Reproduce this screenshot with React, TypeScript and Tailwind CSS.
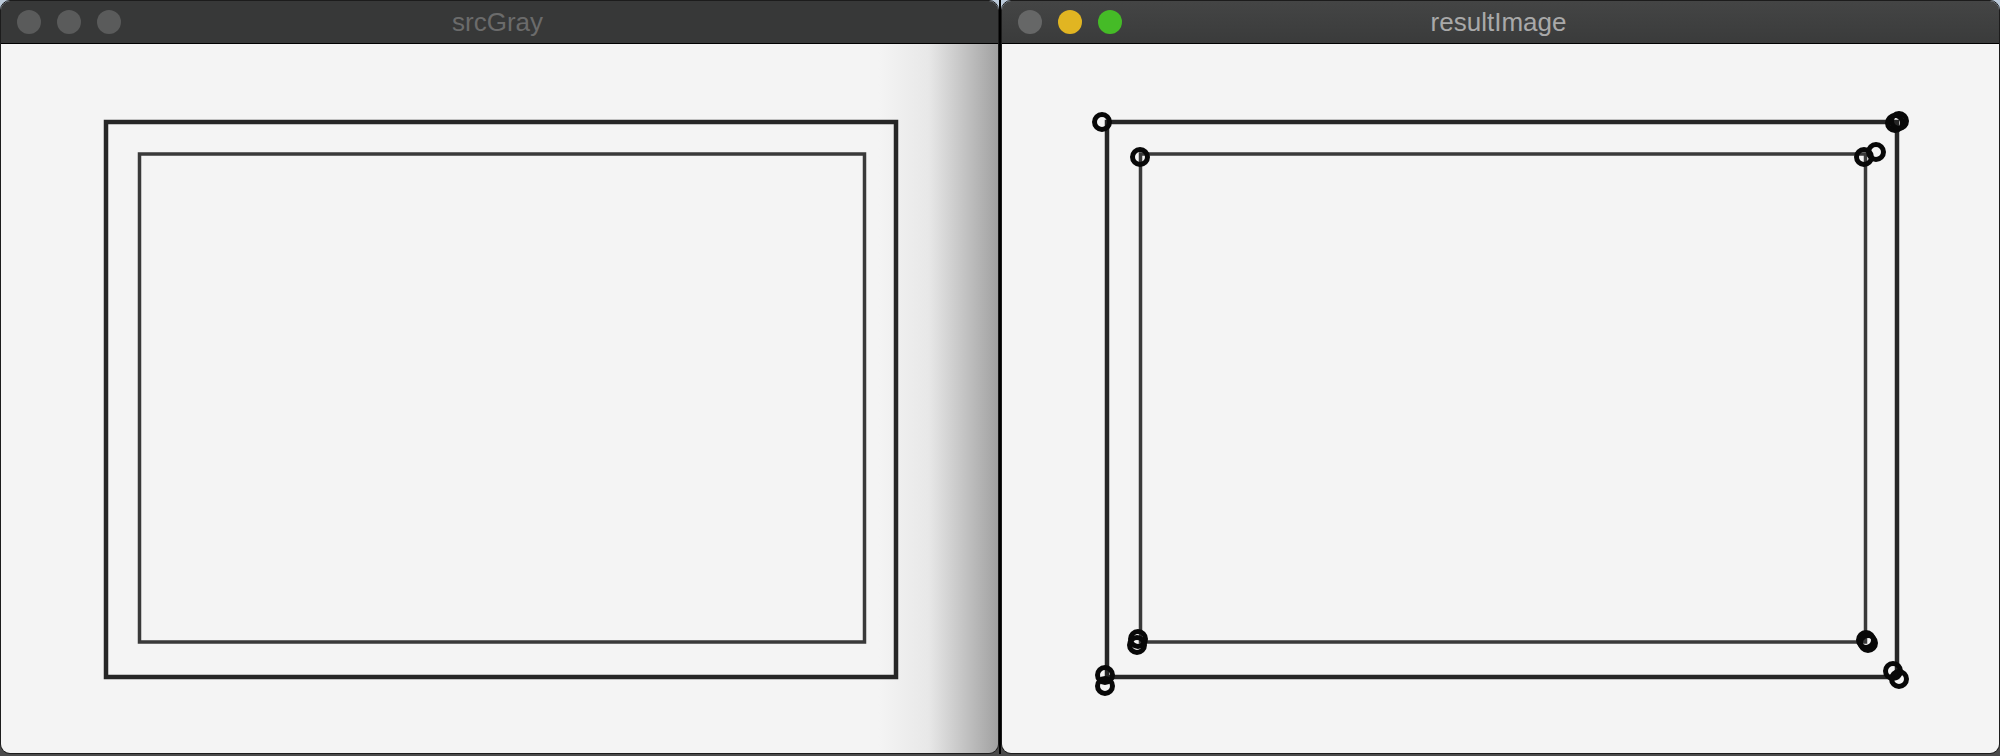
import React, { FC } from 'react'

type Ring = { x: number; y: number }

const TrafficLights: FC<{ active: boolean }> = ({ active }) => (
  <div className="flex items-center gap-4 pl-4">
    <span className={active ? 'h-6 w-6 rounded-full bg-[#666767]' : 'h-6 w-6 rounded-full bg-[#5a5b5b]'} />
    <span className={active ? 'h-6 w-6 rounded-full bg-[#e1b522]' : 'h-6 w-6 rounded-full bg-[#5a5b5b]'} />
    <span className={active ? 'h-6 w-6 rounded-full bg-[#45bb27]' : 'h-6 w-6 rounded-full bg-[#5a5b5b]'} />
  </div>
)

const Frames: FC<{ rings?: Ring[] }> = ({ rings = [] }) => (
  <svg width="998" height="709" viewBox="0 44 998 709" className="block">
    <rect x="105" y="122" width="790" height="555" fill="none" stroke="#262626" strokeWidth="4.5" />
    <rect x="138.5" y="154" width="725" height="488" fill="none" stroke="#393939" strokeWidth="3.5" />
    {rings.map((r, i) => (
      <circle key={i} cx={r.x} cy={r.y} r="7.5" fill="none" stroke="#080808" strokeWidth="5" />
    ))}
  </svg>
)

// detected corners, page coords minus the window's left edge
const corners: Ring[] = [
  { x: 100, y: 122 },
  { x: 138, y: 157 },
  { x: 893, y: 123 },
  { x: 897, y: 121 },
  { x: 862, y: 157 },
  { x: 874, y: 152 },
  { x: 136, y: 639 },
  { x: 135, y: 645 },
  { x: 103, y: 675 },
  { x: 103, y: 686 },
  { x: 864, y: 640 },
  { x: 866, y: 643 },
  { x: 891, y: 671 },
  { x: 897, y: 679 },
]

const Window: FC<{ title: string; active: boolean; shadow?: boolean; rings?: Ring[] }> = ({
  title,
  active,
  shadow,
  rings,
}) => (
  <div className="flex h-[754px] w-[999px] flex-col overflow-hidden rounded-[10px] border border-[#1c1c1c]">
    <div
      className={
        active
          ? 'relative flex h-[43px] shrink-0 items-center border-b border-black bg-[linear-gradient(to_bottom,#444545,#3a3b3b)]'
          : 'relative flex h-[43px] shrink-0 items-center border-b border-black bg-[#373838]'
      }
    >
      <TrafficLights active={active} />
      <span
        className={
          active
            ? 'flex-1 pr-[124px] text-center font-["Liberation_Sans",Arial,sans-serif] text-[26px] leading-none text-[#a9a9a9]'
            : 'flex-1 pr-[124px] text-center font-["Liberation_Sans",Arial,sans-serif] text-[26px] leading-none text-[#6b6b6b]'
        }
      >
        {title}
      </span>
    </div>
    <div
      className={
        shadow
          ? 'flex-1 bg-[linear-gradient(to_right,#f4f4f4_88%,#e8e8e8_93%,#a1a1a1_100%)]'
          : 'flex-1 bg-[#f4f4f4]'
      }
    >
      <Frames rings={rings} />
    </div>
  </div>
)

export default function App() {
  return (
    <div className="flex h-[756px] w-[2000px] items-start bg-[linear-gradient(to_bottom,#bccbdb_0,#bccbdb_24px,#4b4b4b_24px)]">
      <Window title="srcGray" active={false} shadow />
      <div className="h-[754px] w-[2px] bg-black" />
      <Window title="resultImage" active rings={corners} />
    </div>
  )
}
